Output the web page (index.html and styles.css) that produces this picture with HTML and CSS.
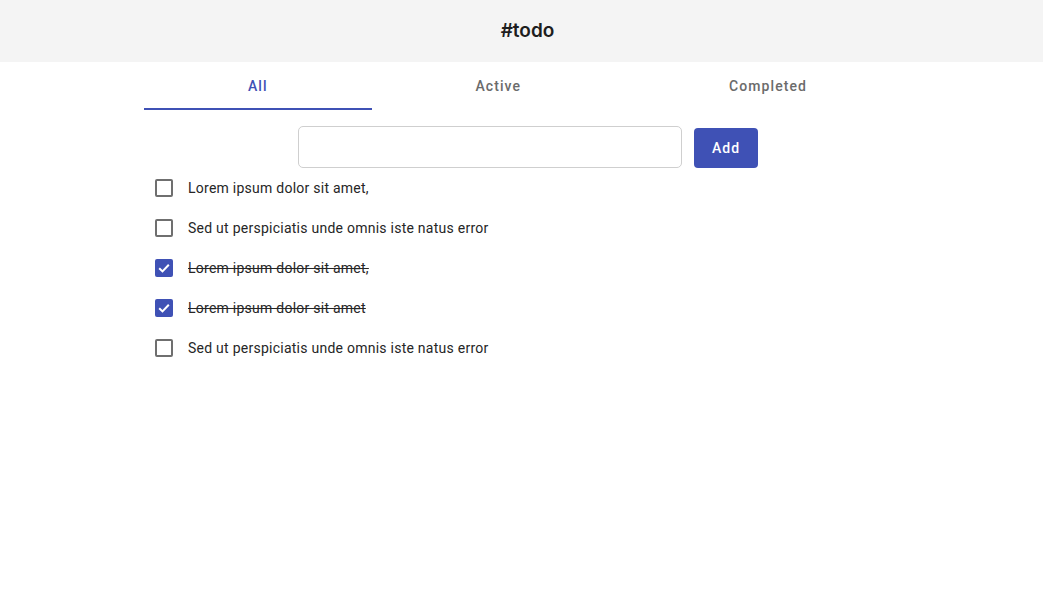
FILE: index.html
```html
<!DOCTYPE html>
<html>
<head>
<meta charset="utf-8">
<link rel="stylesheet" href="styles.css">
</head>
<body>
<header class="topbar"><h1 class="title">#todo</h1></header>
<main class="container">
  <nav class="tabs">
    <div class="tab active">All</div>
    <div class="tab">Active</div>
    <div class="tab">Completed</div>
  </nav>
  <form class="add-form">
    <input class="add-input" type="text">
    <button class="add-btn" type="button">Add</button>
  </form>
  <ul class="list">
    <li class="item"><span class="box"></span><span class="label">Lorem ipsum dolor sit amet,</span></li>
    <li class="item"><span class="box"></span><span class="label">Sed ut perspiciatis unde omnis iste natus error</span></li>
    <li class="item done"><span class="box checked"><svg viewBox="0 0 18 18" width="18" height="18"><path d="M4.2 9.2 L7.5 12.4 L13.8 5.8" fill="none" stroke="#fff" stroke-width="2"/></svg></span><span class="label">Lorem ipsum dolor sit amet,</span></li>
    <li class="item done"><span class="box checked"><svg viewBox="0 0 18 18" width="18" height="18"><path d="M4.2 9.2 L7.5 12.4 L13.8 5.8" fill="none" stroke="#fff" stroke-width="2"/></svg></span><span class="label">Lorem ipsum dolor sit amet</span></li>
    <li class="item"><span class="box"></span><span class="label">Sed ut perspiciatis unde omnis iste natus error</span></li>
  </ul>
</main>
</body>
</html>
```
FILE: styles.css
```css
* { box-sizing: border-box; }
html, body { margin: 0; padding: 0; background: #fff; }
body { font-family: Roboto, "Liberation Sans", sans-serif; color: #212121; }
.topbar {
  height: 62px;
  background: #f4f4f4;
  display: flex;
  align-items: center;
  justify-content: center;
  padding-left: 12px;
  padding-bottom: 2px;
}
.title {
  margin: 0;
  font-family: Inter, "Noto Sans", sans-serif;
  font-weight: 600;
  font-size: 19px;
  color: #1e1e1e;
}
.container {
  width: 767px;
  margin-left: 144px;
}
.tabs {
  display: flex;
  height: 48px;
}
.tab {
  flex: 1 1 auto;
  display: flex;
  align-items: center;
  justify-content: center;
  padding: 0 24px 0 24px;
  font-size: 14px;
  font-weight: 500;
  letter-spacing: 1.1px;
  color: #6b6b6b;
}
.tab.active {
  color: #3f51b5;
  border-bottom: 2px solid #3f51b5;
  padding-top: 1px;
}
.add-form {
  display: flex;
  align-items: center;
  gap: 12px;
  margin: 16px 0 0 154px;
}
.add-input {
  width: 384px;
  height: 42px;
  border: 1px solid #cfcfcf;
  border-radius: 5px;
  padding: 0 10px;
  font: 14px Roboto, sans-serif;
}
.add-btn {
  width: 64px;
  height: 40px;
  margin-top: 2px;
  border: none;
  border-radius: 4px;
  background: #3f51b5;
  color: #fff;
  font: 500 14px Roboto, sans-serif;
  letter-spacing: 1px;
}
.list {
  list-style: none;
  margin: 0;
  padding: 0 0 0 11px;
}
.item {
  height: 40px;
  display: flex;
  align-items: center;
  gap: 15px;
  font-size: 14px;
  letter-spacing: 0.25px;
  color: #262626;
}
.box {
  width: 18px;
  height: 18px;
  border: 2px solid #6f6f6f;
  border-radius: 2px;
  display: inline-flex;
  flex: none;
}
.box.checked {
  border: none;
  background: #3f51b5;
}
.done .label { text-decoration: line-through; }
```
